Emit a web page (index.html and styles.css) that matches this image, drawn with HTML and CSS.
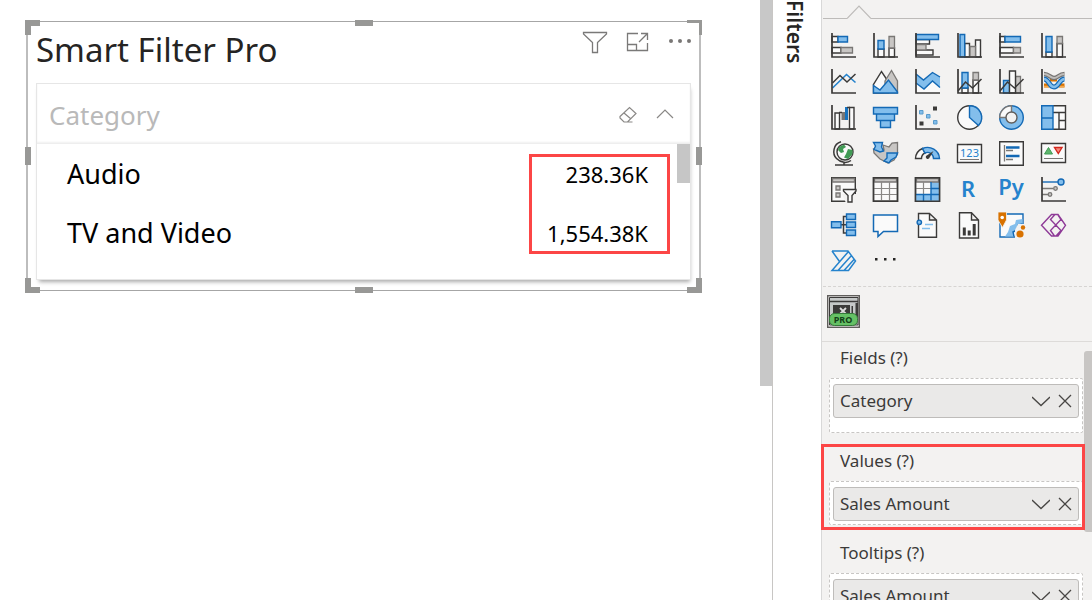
FILE: index.html
```html
<!DOCTYPE html>
<html lang="en">
<head>
<meta charset="utf-8">
<title>Smart Filter Pro</title>
<link rel="stylesheet" href="styles.css">
</head>
<body>
<div class="app">
  <main class="canvas">
    <section class="visual">
      <i class="handle corner tl"></i><i class="handle bar top"></i><i class="handle corner tr"></i>
      <i class="handle side left"></i><i class="handle side right"></i>
      <i class="handle corner bl"></i><i class="handle bar bottom"></i><i class="handle corner br"></i>
      <header class="visual-head">
        <h1 class="visual-title">Smart Filter Pro</h1>
        <div class="visual-tools">
          <button class="plain" aria-label="Filters"><svg width="26" height="24" viewBox="0 0 26 24" class="tool"><path d="M1.500 2.500H24.500V4L15.500 12.500V22.500H10.500V12.500L1.500 4Z"/></svg></button>
          <button class="plain" aria-label="Focus mode"><svg width="24" height="24" viewBox="0 0 24 24" class="tool"><path d="M12 3.500H1.500V20.500H21.500V13M1.500 14.500H10.500V20.500M13 12L21 4M15 3.500H21.500V10"/></svg></button>
          <button class="plain" aria-label="More options"><svg width="24" height="24" viewBox="0 0 24 24" class="dots"><circle cx="3" cy="11" r="2"/><circle cx="12" cy="11" r="2"/><circle cx="21" cy="11" r="2"/></svg></button>
        </div>
      </header>
      <div class="slicer">
        <div class="slicer-head">
          <h2 class="slicer-title">Category</h2>
          <div class="slicer-tools">
            <button class="plain" aria-label="Clear"><svg width="20" height="20" viewBox="0 0 20 20" class="thin"><path d="M2 11.500L11.500 2.500L18 8.500L9.500 17H6L2 13ZM6 8L13 14M6 17H14.500"/></svg></button>
            <button class="plain" aria-label="Collapse"><svg width="18" height="20" viewBox="0 0 18 20" class="thin"><path d="M1 13L9 5L17 13"/></svg></button>
          </div>
        </div>
        <div class="slicer-body">
          <div class="slicer-row"><span>Audio</span><span class="amount">238.36K</span></div>
          <div class="slicer-row"><span>TV and Video</span><span class="amount">1,554.38K</span></div>
          <i class="thumb"></i>
          <i class="mark mark-amounts"></i>
        </div>
      </div>
    </section>
  </main>
  <div class="canvas-scroll"><i class="canvas-thumb"></i></div>
  <aside class="filters"><span class="filters-label">Filters</span></aside>
  <aside class="panel">
    <div class="tab-edge"><i class="line short"></i><svg width="24" height="14" viewBox="0 0 24 14" class="caret"><path d="M0 13.500L12 1L24 13.500"/></svg><i class="line"></i></div>
    <div class="gallery">
      <button class="plain" aria-label="Stacked bar chart"><svg class="ico" viewBox="0 0 26 26"><path class="w" d="M2 4.500H8V10H2ZM2 15.500H11V21H2Z"/><path class="g" d="M11 15.500H22.500V21H11Z"/><path class="b" d="M8 4.500H17.500V10H8Z"/><path class="k" d="M2 1V25H26"/></svg></button>
      <button class="plain" aria-label="Stacked column chart"><svg class="ico" viewBox="0 0 26 26"><path class="w" d="M6 17H12V25H6ZM17 16H22.500V25H17Z"/><path class="g" d="M17 4.500H22.500V16H17Z"/><path class="b" d="M6 8.500H12V17H6Z"/><path class="k" d="M2 1V25H26"/></svg></button>
      <button class="plain" aria-label="Clustered bar chart"><svg class="ico" viewBox="0 0 26 26"><path class="w" d="M2 7.500H15.500V12H2ZM2 18H19V23H2Z"/><path class="g" d="M2 12.500H12V18H2Z"/><path class="b" d="M2 2.500H24.500V7.500H2Z"/><path class="k" d="M2 1V25H26"/></svg></button>
      <button class="plain" aria-label="Clustered column chart"><svg class="ico" viewBox="0 0 26 26"><path class="w" d="M8.700 11.500H13.500V25H8.700ZM19.500 8H24.500V25H19.500Z"/><path class="g" d="M14 14.500H19.500V25H14Z"/><path class="b" d="M4 2.500H8.700V25H4Z"/><path class="k" d="M2 1V25H26"/></svg></button>
      <button class="plain" aria-label="100% stacked bar chart"><svg class="ico" viewBox="0 0 26 26"><path class="w" d="M2 4.500H7V10H2ZM2 15.500H15.500V21H2Z"/><path class="g" d="M15.500 15.500H22.500V21H15.500Z"/><path class="b" d="M7 4.500H22.500V10H7Z"/><path class="k" d="M2 1V25H26"/></svg></button>
      <button class="plain" aria-label="100% stacked column chart"><svg class="ico" viewBox="0 0 26 26"><path class="w" d="M6 20H12V25H6ZM17 11.500H22.500V25H17Z"/><path class="g" d="M17 4.500H22.500V11.500H17Z"/><path class="b" d="M6 4.500H12V20H6Z"/><path class="k" d="M2 1V25H26"/></svg></button>

      <button class="plain" aria-label="Line chart"><svg class="ico" viewBox="0 0 26 26"><path class="bl" d="M2.500 20L16.500 6.500L25.500 14.500"/><path class="kl" d="M2.500 15L10 7.500L17 14L25.500 6"/><path class="k" d="M2 1V25H26"/></svg></button>
      <button class="plain" aria-label="Area chart"><svg class="ico" viewBox="0 0 26 26"><path class="w" d="M1.500 25V16.500L9.500 3.500L16.500 14V25Z"/><path class="g" d="M13 13L19.500 2.500L25.500 13V25H13Z"/><path class="b" d="M1.500 25V17.500L8 22L16.500 12L25.500 24V25Z"/></svg></button>
      <button class="plain" aria-label="Stacked area chart"><svg class="ico" viewBox="0 0 26 26"><path fill="#fafafa" d="M2 15L10 21L18.500 13L26 19V25H2Z"/><path fill="#83beec" d="M2 6L9.500 12L18.500 4.500L26 9V19.500L18.500 13L10 21L2 15Z"/><path class="dl" d="M2 6L9.500 12L18.500 4.500L26 9M2 15L10 21L18.500 13L26 19.500"/><path class="k" d="M2 1V25H26"/></svg></button>
      <button class="plain" aria-label="Line and stacked column chart"><svg class="ico" viewBox="0 0 26 26"><path class="w" d="M6 20H12V25H6ZM17 12H22.500V25H17Z"/><path class="g" d="M17 4.500H22.500V12H17Z"/><path class="b" d="M6 4.500H12V20H6Z"/><path class="kl" d="M2 23L9.500 14L16.500 20L25.500 11"/><path class="k" d="M2 1V25H26"/></svg></button>
      <button class="plain" aria-label="Line and clustered column chart"><svg class="ico" viewBox="0 0 26 26"><path class="b" d="M5.500 12.500H11.500V25H5.500Z"/><path class="g" d="M17.500 8.500H22.500V25H17.500Z"/><path class="w" d="M11.500 3H17.500V25H11.500Z"/><path class="kl" d="M2 23L9.500 14L16.500 20L25.500 11"/><path class="k" d="M2 1V25H26"/></svg></button>
      <button class="plain" aria-label="Ribbon chart"><svg class="ico" viewBox="0 0 26 26"><path d="M4 17.500H9M19 17.500H24.500M10 11.500H17" stroke="#d87200" stroke-width="4"/><path d="M4 18.500H24.500" stroke="#f7a84a" stroke-width="1.500"/><path d="M4 6C9 6 10 10 14 10S19 6 24.500 6" fill="none" stroke="#767472" stroke-width="4.500"/><path d="M4 6C9 6 10 10 14 10S19 6 24.500 6" fill="none" stroke="#bfbdbb" stroke-width="2"/><path d="M4 11C9 11 9 19 14 19S19 11 24.500 11" fill="none" stroke="#1369b5" stroke-width="5"/><path d="M4 11C9 11 9 19 14 19S19 11 24.500 11" fill="none" stroke="#83beec" stroke-width="2.500"/><path class="k" d="M2 1V25H26"/></svg></button>

      <button class="plain" aria-label="Waterfall chart"><svg class="ico" viewBox="0 0 26 26"><path class="w" d="M5 9H9.500V25H5ZM19.500 3.500H24V25H19.500Z"/><path fill="#797775" d="M11.500 8H15V16H11.500Z"/><path fill="#1673c0" d="M15 3H18V16H15Z"/><path class="kl" d="M9 8.500H12M17 3.500H20"/><path class="k" d="M2 1V25H26"/></svg></button>
      <button class="plain" aria-label="Funnel"><svg class="ico" viewBox="0 0 26 26"><path class="b" d="M1.500 3.500H25.500V10H1.500ZM4.500 10H22.500V16.500H4.500ZM8.500 16.500H18.500V23.500H8.500Z"/></svg></button>
      <button class="plain" aria-label="Scatter chart"><svg class="ico" viewBox="0 0 26 26"><path fill="#3b3a39" d="M19 2.500H23V6.500H19ZM5.500 17.500H9.500V21.500H5.500Z"/><path fill="#83beec" stroke="#5a9ccc" d="M5.500 6.500H9V10H5.500ZM12.500 10.500H16V14H12.500ZM19.500 16.500H23V20H19.500Z"/><path class="k" d="M2 1V25H26"/></svg></button>
      <button class="plain" aria-label="Pie chart"><svg class="ico" viewBox="0 0 26 26"><circle class="w" cx="13.500" cy="13.500" r="11.800"/><path class="b" d="M13.500 1.700A11.800 11.800 0 0 1 22.500 21.500L13.500 13.500Z"/></svg></button>
      <button class="plain" aria-label="Donut chart"><svg class="ico" viewBox="0 0 26 26"><circle class="b" cx="13.500" cy="13.500" r="11.800"/><path class="w gs" d="M13.500 1.700A11.800 11.800 0 0 0 1.700 13.500H13.500Z"/><circle cx="13.500" cy="13.500" r="5.500" fill="#f3f2f1" stroke="#605e5c" stroke-width="1.400"/></svg></button>
      <button class="plain" aria-label="Treemap"><svg class="ico" viewBox="0 0 26 26"><path class="w" d="M1.700 1.700H25.500V25.300H1.700ZM13 8.500H25.500M19 8.500V25M19 16.500H25.500"/><path class="b" d="M1.700 1.700H13V14H1.700ZM1.700 14H13V25.300H1.700Z"/></svg></button>

      <button class="plain" aria-label="Map"><svg class="ico" viewBox="0 0 26 26"><circle class="w" cx="15" cy="12" r="8"/><path fill="#409a54" d="M9 7L14 4.500L16 7L13 9L14 12L11 13L8 10ZM18 9L22.500 10V14L18 19L14 17.500L16 14Z"/><path class="kl" d="M11 1.800C3 4 2 14 6.500 18.500S17 23.500 21 20.500M14 22.500V25M5 25H23"/></svg></button>
      <button class="plain" aria-label="Filled map"><svg class="ico" viewBox="0 0 26 26"><path class="g gs" d="M11 5L17 7L20 3L25.500 2.500V14L22 20L16 23L8 19L2 13L1.500 9H7L12 10Z"/><path class="b" d="M1.500 2.500H10.500L9.500 7L11.500 11L8 12L2 9.500L3.500 6ZM15 13H25.500L24 17L19 20L17 23L12 21L15 18Z"/></svg></button>
      <button class="plain" aria-label="Gauge"><svg class="ico" viewBox="0 0 26 26"><path class="w" d="M1.500 18.500A12 11.500 0 0 1 8.500 8.500L11 13A6 6 0 0 0 7.500 18.500Z"/><path class="b" d="M8.500 8.500A12 11.500 0 0 1 25.500 18.500H19.500A6 6 0 0 0 11 13Z"/><path d="M19.500 11L15 18.500A2 2 0 0 1 12 16Z" fill="#3b3a39"/></svg></button>
      <button class="plain" aria-label="Card"><svg class="ico" viewBox="0 0 26 26"><path class="w" d="M1.500 4.500H25.500V22.500H1.500Z"/><text x="13.500" y="17" text-anchor="middle" class="t-card">123</text><path d="M4 19.500H23" stroke="#797775"/></svg></button>
      <button class="plain" aria-label="Multi-row card"><svg class="ico" viewBox="0 0 26 26"><path class="w" d="M1.700 1.700H25.300V25.300H1.700Z"/><path d="M6.500 5V21.500M8 10.500H15M8 19.500H15" stroke="#797775" stroke-width="1.300"/><path d="M8 7.500H21.500M8 16H21.500" stroke="#1369b5" stroke-width="2.500"/></svg></button>
      <button class="plain" aria-label="KPI"><svg class="ico" viewBox="0 0 26 26"><path class="w" d="M1.500 3.500H25.500V22.500H1.500Z"/><path fill="#5db56c" stroke="#409a54" d="M8.500 7.500L12.500 14H4.500Z"/><path fill="#f58b7d" stroke="#d3261c" stroke-width="1.400" d="M14.500 7.500H22L18.300 13.500Z"/><path d="M4 18.500H23" stroke="#797775"/></svg></button>

      <button class="plain" aria-label="Slicer"><svg class="ico" viewBox="0 0 26 26"><path class="w" d="M1.700 1.700H25.300V25.300H1.700Z"/><path class="g gs" d="M2.500 2.500H24.500V6H2.500Z"/><path class="g gs" d="M6 10H10V14H6ZM6 17H10V21H6Z"/><path fill="#f3f2f1" d="M12 18H27V27H16Z"/><path class="w" d="M13.500 13.500H26V15L22 19.500V26H18V19.500L13.500 15Z"/></svg></button>
      <button class="plain" aria-label="Table"><svg class="ico" viewBox="0 0 26 26"><path class="w" d="M1.500 1.700H25.500V25.300H1.500Z"/><path class="g gs" d="M2.500 2.500H24.500V6H2.500Z"/><path d="M9.500 6V24.500M17.500 6V24.500M2 12.500H25M2 18.500H25" stroke="#8a8886" stroke-width="1.200"/><path class="kl" d="M1.500 1.700H25.500V25.300H1.500Z"/></svg></button>
      <button class="plain" aria-label="Matrix"><svg class="ico" viewBox="0 0 26 26"><path class="w" d="M1.500 1.700H25.500V25.300H1.500Z"/><path fill="#83beec" d="M17 6H25V25H2V18.500H17Z"/><path class="g gs" d="M2.500 2.500H24.500V6H2.500Z"/><path d="M9.500 6V18M2 12.500H17" stroke="#8a8886" stroke-width="1.200"/><path class="dl" d="M17 6V24.500M2 18.500H25M17 12.500H25M9.500 18.500V25"/><path class="kl" d="M1.500 1.700H25.500V25.300H1.500Z"/></svg></button>
      <button class="plain" aria-label="R script visual"><svg class="ico" viewBox="0 0 26 26"><text x="12" y="21" text-anchor="middle" class="t-lang">R</text></svg></button>
      <button class="plain" aria-label="Python visual"><svg class="ico" viewBox="0 0 26 26"><text x="13" y="19" text-anchor="middle" class="t-lang">Py</text></svg></button>
      <button class="plain" aria-label="Key influencers"><svg class="ico" viewBox="0 0 26 26"><path d="M2 12.500H13.500M2 18.500H8" stroke="#797775" stroke-width="1.500"/><path class="dl" d="M2 6H18"/><circle class="b" cx="21" cy="6" r="3"/><circle class="g" cx="15.500" cy="12.500" r="1.800"/><circle class="g" cx="10" cy="18.500" r="1.800"/><path class="k" d="M2 1V25H26"/></svg></button>

      <button class="plain" aria-label="Decomposition tree"><svg class="ico" viewBox="0 0 26 26"><path class="kl" d="M11 12.700H16M16 4.500H13.500V21H16"/><path class="b" d="M1.500 9.700H11V15.700H1.500ZM16.500 2H25.500V7.500H16.500ZM16.500 10H25.500V15.500H16.500ZM16.500 18H25.500V23.500H16.500Z"/></svg></button>
      <button class="plain" aria-label="Q&amp;A"><svg class="ico" viewBox="0 0 26 26"><path d="M1.500 3H25.500V19.500H11.500L6 24.500V19.500H1.500Z" fill="#fafafa" stroke="#1369b5" stroke-width="1.500"/></svg></button>
      <button class="plain" aria-label="Smart narrative"><svg class="ico" viewBox="0 0 26 26"><path class="w" d="M4.500 1.500H15.500L22.500 8V25.300H4.500ZM15.500 1.500V8H22.500"/><path d="M11 12.500H19M8 16.500H16" stroke="#83beec" stroke-width="1.600"/><circle class="b" cx="5.300" cy="10.300" r="2.200"/></svg></button>
      <button class="plain" aria-label="Paginated report"><svg class="ico" viewBox="0 0 26 26"><path class="w" d="M3.500 .8H15.500L22.500 8V26H3.500ZM15.500 .8V8H22.500"/><path d="M8.300 15.500V23.500M13.200 18.500V23.500M18.200 12V23.500" stroke="#3b3a39" stroke-width="3"/></svg></button>
      <button class="plain" aria-label="ArcGIS maps"><svg class="ico" viewBox="0 0 26 26"><path fill="#fafafa" stroke="#1369b5" stroke-width="1.400" d="M2 2H25V25H2Z"/><path fill="#83beec" d="M24.500 7L18 8L17 12L12 14L10 20L7 24.500H16L15 20L19 18L20 13L24.500 12Z"/><path class="dl" d="M24.500 12L20 13L19 18L15 20L16 24.500"/><path fill="#f3f2f1" d="M17 18L20 12H27V27H17Z"/><path fill="#d87200" stroke="#f3f2f1" stroke-width=".8" d="M0 0H8.500V8L4.500 15.500L0 8Z"/><circle cx="4.200" cy="5.500" r="1.800" fill="#fff"/><circle cx="22" cy="22" r="3.600" fill="#d87200"/><circle cx="25" cy="15.500" r="2.200" fill="#d87200"/></svg></button>
      <button class="plain" aria-label="Power Apps"><svg class="ico pp" viewBox="0 0 26 26"><path d="M11.500 2.500H18L25.500 13.300L18 24H11.500L1.500 13.300ZM14.500 3L10.500 7.500L21 18.500L16 24M18 3L21 7.500L10.500 18.500L14.500 24"/></svg></button>

      <button class="plain" aria-label="Power Automate"><svg class="ico pa" viewBox="0 0 26 26"><path d="M2 3H18L25.500 13L18.500 22.500H2L18.500 3.500M2 3L9.500 13.500M8 22.500L21.500 7.500M14 22.500L24 11.500"/></svg></button>
      <button class="plain" aria-label="Get more visuals"><svg class="ico" viewBox="0 0 26 26"><path fill="#252423" d="M3 10H5.500V12.500H3ZM12 10H14.500V12.500H12ZM21 10H23.500V12.500H21Z"/></svg></button>
    </div>
    <div class="custom">
      <button class="plain" aria-label="Smart Filter Pro visual"><svg width="33" height="33" viewBox="0 0 33 33"><rect x=".7" y=".7" width="31.600" height="31.600" fill="#f3f2f1" stroke="#605e5c" stroke-width="1.400"/><path d="M2.500 2.500H31V30H2.500Z" fill="#c5c8c8" stroke="#3b3a39"/><path d="M3 6.500H31" stroke="#3b3a39" stroke-width="1.500"/><path d="M6 10H23V20H6ZM24.500 11H26V20H24.500ZM28.500 8H31V22H28.500Z" fill="#3b3a39"/><path d="M13 13L19 19M19 13L13 19" stroke="#ddd" stroke-width="1.800"/><rect x="2.500" y="18.500" width="28" height="12" rx="5" fill="#65c065" stroke="#347a3a"/><text x="16" y="28" text-anchor="middle" class="t-pro">PRO</text></svg></button>
    </div>
    <div class="fields">
      <section class="field">
        <h3 class="field-label">Fields (?)</h3>
        <div class="well roomy"><div class="pill"><span class="pill-name">Category</span><button class="plain" aria-label="Category menu"><svg class="glyph" viewBox="0 0 18 18"><path d="M0 5L9 13.500L18 5"/></svg></button><button class="plain" aria-label="Remove Category"><svg class="glyph" viewBox="0 0 18 18"><path d="M3 3L15 15M15 3L3 15"/></svg></button></div></div>
      </section>
      <section class="field">
        <h3 class="field-label">Values (?)</h3>
        <div class="well"><div class="pill"><span class="pill-name">Sales Amount</span><button class="plain" aria-label="Sales Amount menu"><svg class="glyph" viewBox="0 0 18 18"><path d="M0 5L9 13.500L18 5"/></svg></button><button class="plain" aria-label="Remove Sales Amount"><svg class="glyph" viewBox="0 0 18 18"><path d="M3 3L15 15M15 3L3 15"/></svg></button></div></div>
        <i class="mark mark-values"></i>
      </section>
      <section class="field">
        <h3 class="field-label">Tooltips (?)</h3>
        <div class="well"><div class="pill"><span class="pill-name">Sales Amount</span><button class="plain" aria-label="Tooltip menu"><svg class="glyph" viewBox="0 0 18 18"><path d="M0 5L9 13.500L18 5"/></svg></button><button class="plain" aria-label="Remove tooltip"><svg class="glyph" viewBox="0 0 18 18"><path d="M3 3L15 15M15 3L3 15"/></svg></button></div></div>
      </section>
      <i class="fields-thumb"></i>
    </div>
  </aside>
</div>
</body>
</html>
```
FILE: styles.css
```css
* { box-sizing: border-box; }
body { margin: 0; font-family: "Noto Sans", "Open Sans", sans-serif; color: #252423; background: #fff; }
h1, h2, h3 { margin: 0; font-weight: 400; }
svg { display: block; }
.plain { display: block; padding: 0; border: 0; background: none; font-family: inherit; cursor: pointer; }

.app { display: flex; height: 100vh; overflow: hidden; }
.canvas { flex: 1; min-width: 0; padding: 21px 59px 0 26px; }

.visual { position: relative; border: 1px solid #a6a6a6; border-left: 2px solid #bdbdbd; border-right: 2px solid #bdbdbd; padding: 5px 8px 10px; }
.handle { position: absolute; border: 0 solid #989896; }
.corner { width: 15px; height: 15px; }
.tl { left: -3px; top: -2px; border-width: 6px 0 0 6px; }
.tr { right: -3px; top: -2px; border-width: 3px 3px 0 0; }
.bl { left: -3px; bottom: -3px; border-width: 0 0 6px 6px; }
.br { right: -3px; bottom: -3px; border-width: 0 6px 6px 0; }
.bar, .side { background: #989896; }
.bar { width: 18px; height: 6px; left: calc(50% - 9px); }
.side { width: 6px; height: 18px; top: calc(50% - 9px); }
.top { top: -2px; }
.bottom { bottom: -3px; }
.left { left: -3px; }
.right { right: -3px; }

.visual-head { display: flex; justify-content: space-between; align-items: flex-start; height: 56px; }
.visual-title { font-size: 33px; line-height: 45px; }
.visual-tools { display: flex; gap: 18px; padding-top: 3px; margin-right: -1px; }
.tool { fill: none; stroke: #7a7978; stroke-width: 1.3; }
.dots { fill: #797775; }

.slicer { border: 1px solid #e6e6e6; box-shadow: 1px 4px 4px -2px #aaa; }
.slicer-head { display: flex; justify-content: space-between; align-items: center; height: 60px; padding: 2px 16px 0 12px; border-bottom: 1px solid #eee; box-shadow: 0 -1px 2px #f0f0f0 inset; }
.slicer-title { font-size: 26px; line-height: 34px; color: #b9b9b9; }
.slicer-tools { display: flex; gap: 18px; }
.thin { fill: none; stroke: #8a8886; stroke-width: 1.2; }
.slicer-body { position: relative; padding: 0 42px 17px 30px; color: #000; }
.slicer-row { display: flex; justify-content: space-between; align-items: center; height: 59px; font-size: 27px; }
.amount { font-size: 22px; }
.thumb { position: absolute; top: 0; right: 0; width: 13px; height: 39px; background: #c6c6c6; }
.mark { position: absolute; border: 3px solid #fc4646; pointer-events: none; }
.mark-amounts { top: 10px; right: 20px; width: 141px; height: 100px; }

.canvas-scroll { width: 13px; border-right: 1px solid #c8c6c4; }
.canvas-thumb { display: block; width: 12px; height: 386px; background: #c8c8c8; }
.filters { width: 48px; }
.filters-label { display: block; margin-left: 8px; width: 28px; height: 60px; writing-mode: vertical-rl; text-align: right; white-space: nowrap; font-size: 21px; line-height: 28px; font-weight: 600; }

.panel { width: 271px; border-left: 1px solid #d8d8d8; background: #f3f2f1; }
.tab-edge { display: flex; align-items: flex-end; padding: 5px 0 0 1px; }
.line { flex: 1; height: 1px; background: #bdbbb9; }
.short { flex: 0 0 24px; }
.caret { fill: none; stroke: #bdbbb9; stroke-width: 1.2; }
.gallery { display: grid; grid-template-columns: repeat(6, 26px); gap: 10px 16px; padding: 13px 0 12px 7px; margin-left: 1px; border-bottom: 1px dashed #d6d4d2; }
.ico { width: 26px; height: 26px; fill: none; overflow: visible; }
.k { fill: none; stroke: #3b3a39; stroke-width: 1.7; }
.kl { fill: none; stroke: #3b3a39; stroke-width: 1.5; }
.bl { stroke: #2583cd; stroke-width: 1.6; }
.dl { fill: none; stroke: #1369b5; stroke-width: 1.4; }
.w { fill: #fafafa; stroke: #3b3a39; stroke-width: 1.4; }
.g { fill: #c8c6c4; stroke: #797775; stroke-width: 1.3; }
.b { fill: #83beec; stroke: #1369b5; stroke-width: 1.4; }
.gs { stroke: #797775; }
.pp { stroke: #8e3a97; stroke-width: 1.4; }
.pa { stroke: #2583cd; stroke-width: 1.5; }
.t-card { font-size: 11px; fill: #2583cd; }
.t-lang { font-size: 22px; font-weight: 600; fill: #2583cd; }
.t-pro { font-size: 9px; font-weight: 700; fill: #123f18; }

.custom { padding: 8px 0 13px 5px; border-bottom: 1px solid #dddbd9; }
.fields { position: relative; z-index: 0; display: flex; flex-direction: column; gap: 16px; padding: 4px 9px 0 7px; }
.field { position: relative; }
.field-label { padding-left: 11px; margin-bottom: 8px; font-size: 17px; line-height: 24px; color: #3b3a39; }
.well { padding: 5px 3px 3px; border: 1px dashed #c8c6c4; border-radius: 2px; background: #fff; }
.roomy { padding-bottom: 14px; }
.pill { display: flex; align-items: center; gap: 6px; height: 34px; padding: 0 4px 0 6px; border: 1px solid #bebcba; border-radius: 3px; background: #eae9e8; font-size: 17px; line-height: 22px; color: #3b3a39; }
.pill-name { flex: 1; }
.glyph { width: 18px; height: 18px; fill: none; stroke: #484644; stroke-width: 1.3; }
.mark-values { top: -5px; left: -8px; right: -2px; bottom: -5px; }
.fields-thumb { position: absolute; top: 9px; right: 0; width: 8px; height: 181px; border-radius: 3px 0 0 3px; background: #c8c6c4; z-index: -1; }
```
